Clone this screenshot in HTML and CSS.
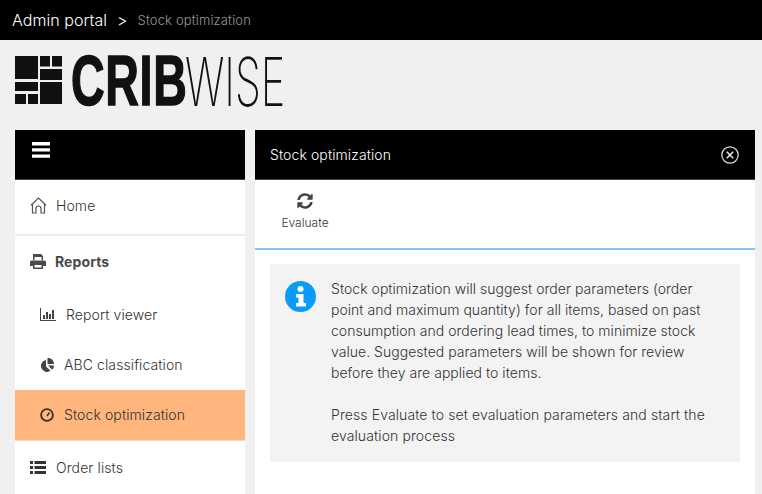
FILE: index.html
```html
<!DOCTYPE html>
<html lang="en">
<head>
    <meta charset="UTF-8">
    <title>Stock optimization</title>
    <link rel="stylesheet" href="styles.css">
</head>
<body>
    <div class="topbar">
        <span class="crumb-main">Admin portal</span>
        <span class="crumb-sep">&gt;</span>
        <span class="crumb-sub">Stock optimization</span>
    </div>
    <div class="logo">
        <svg class="logo-mark" width="48" height="49" viewBox="0 0 48 49">
            <path fill="#111" d="M0 0h23v23H0zM0 26h23v9H0zM0 38h11v10H0zM13 38h10v10H13zM25 0h10v10.500H25zM37 0h10v10.500H37zM25 13h22v11H25zM25 26h22v22H25z"/>
        </svg>
        <span class="logo-crib">CRIB</span>
        <span class="logo-wise">WISE</span>
    </div>
    <div class="main">
        <div class="side">
            <div class="side-head">
                <svg width="18" height="16" viewBox="0 0 18 16"><path fill="#fff" d="M0 0h18v3.400H0zM0 6.200h18v3.400H0zM0 12.400h18v3.400H0z"/></svg>
            </div>
            <ul class="menu">
                <li class="item item-home">
                    <svg class="icon" width="17" height="17" viewBox="0 0 17 17"><path fill="none" stroke="#555" stroke-width="1.200" d="M1 8.200 8.500 1 16 8.200M2.500 7v9H6v-4.500a2.500 2.500 0 0 1 5 0V16h3.500V7"/></svg>
                    Home
                </li>
                <li class="item item-reports">
                    <svg class="icon" width="16" height="15" viewBox="0 0 16 15"><path fill="#4a4a4a" d="M3 0h8l2 2v4h-1.500V3H4.500v3H3zM1.500 6.500h13A1.500 1.500 0 0 1 16 8v4h-3v3H3v-3H0V8a1.500 1.500 0 0 1 1.500-1.500zM4.500 11v2.500h7V11z"/></svg>
                    Reports
                </li>
                <li class="item sub">
                    <svg class="icon" width="16" height="13" viewBox="0 0 16 13"><path fill="#444" d="M0 0h1v12h15v1H0zM3 7h2v4H3zM6 4h2v7H6zM9 6h2v5H9zM12 2h2v9h-2z"/></svg>
                    Report viewer
                </li>
                <li class="item sub">
                    <svg class="icon" width="14" height="14" viewBox="0 0 14 14"><path fill="#444" d="M6 2v6.500l4.500 4.300A6 6 0 1 1 6 2zM7.500 0A6 6 0 0 1 14 6H7.500zM8 7.500h6a6 6 0 0 1-1.800 4.200z"/></svg>
                    ABC classification
                </li>
                <li class="item sub active">
                    <svg class="icon" width="14" height="14" viewBox="0 0 14 14"><circle cx="7" cy="7" r="5.900" fill="none" stroke="#333" stroke-width="1.800"/><path stroke="#333" stroke-width="1.500" d="M7 8 9.500 4.500"/></svg>
                    Stock optimization
                </li>
                <li class="item item-lists">
                    <svg class="icon" width="16" height="13" viewBox="0 0 16 13"><path fill="#333" d="M0 0h3v3H0zM4.500 0H16v3H4.500zM0 5h3v3H0zM4.500 5H16v3H4.500zM0 10h3v3H0zM4.500 10H16v3H4.500z"/></svg>
                    Order lists
                </li>
            </ul>
        </div>
        <div class="panel">
            <div class="panel-head">
                <span>Stock optimization</span>
                <svg width="18" height="18" viewBox="0 0 18 18"><circle cx="9" cy="9" r="8.200" fill="none" stroke="#ddd" stroke-width="1.200"/><path stroke="#eee" stroke-width="1.500" d="M5.800 5.800l6.400 6.400M12.200 5.800l-6.400 6.400"/></svg>
            </div>
            <div class="toolbar">
                <div class="tool">
                    <svg width="16" height="16" viewBox="0 0 512 512"><path fill="#444" d="M370.700 133.300C339.500 104 298.900 88 255.800 88c-77.500.1-144.300 53.200-162.800 126.900-1.300 5.400-6.100 9.200-11.700 9.200H24.100c-7.500 0-13.200-6.800-11.800-14.200C34 94.600 135.500 8 256 8c66.100 0 126.100 26 170.400 68.300L462.100 40.600C477.200 25.500 503 36.200 503 57.600V192c0 13.300-10.700 24-24 24H344.600c-21.400 0-32.100-25.900-17-41zM32 296h134.400c21.400 0 32.100 25.900 17 41l-41.800 41.800c31.300 29.300 71.800 45.300 114.900 45.200 77.400-.1 144.300-53.100 162.800-126.800 1.300-5.400 6.100-9.200 11.700-9.200h57.300c7.500 0 13.200 6.800 11.800 14.200C478 417.400 376.500 504 256 504c-66.100 0-126.100-26-170.400-68.300L49.900 471.400C34.800 486.500 9 475.800 9 454.400V320c0-13.300 10.700-24 24-24z"/></svg>
                    <span>Evaluate</span>
                </div>
            </div>
            <div class="body">
                <div class="notice">
                    <svg class="notice-icon" width="31" height="31" viewBox="0 0 31 31">
                        <circle cx="15.500" cy="15.500" r="15.500" fill="#0a9bfb"/>
                        <circle cx="15.500" cy="8" r="3" fill="#fff"/>
                        <path fill="#fff" d="M11 13h7.500v9H21v3.500H11V22h2.500v-5.500H11z"/>
                    </svg>
                    <div class="notice-text">
                        <p>Stock optimization will suggest order parameters (order point and maximum quantity) for all items, based on past consumption and ordering lead times, to minimize stock value. Suggested parameters will be shown for review before they are applied to items.</p>
                        <p class="notice-press">Press Evaluate to set evaluation parameters and start the evaluation process</p>
                    </div>
                </div>
            </div>
        </div>
    </div>
</body>
</html>
```

FILE: styles.css
```css
*{
    margin:0;
    padding:0;
    box-sizing: border-box;
}
html,body{
    height: 100%;
    overflow: hidden;
}
body{
    background: #f0f0f0;
    font-family: Inter, "Liberation Sans", sans-serif;
    font-size: 14px;
    font-weight: 300;
    color: #333;
}
li{
    list-style: none;
}
.topbar{
    height: 40px;
    background: #000;
    display: flex;
    align-items: center;
    padding-left: 12px;
}
.crumb-main{
    color: #fff;
    font-size: 16px;
    letter-spacing: 0.05px;
}
.crumb-sep{
    color: #fff;
    font-size: 16px;
    margin-left: 10px;
}
.crumb-sub{
    color: #999;
    font-size: 13px;
    margin-left: 10px;
    letter-spacing: 0.15px;
}
.logo{
    height: 90px;
    padding: 16px 0 0 15px;
    display: flex;
    align-items: flex-start;
    overflow: hidden;
}
.logo-mark{
    flex: none;
}
.logo-crib{
    font-family: "Liberation Sans", sans-serif;
    font-weight: bold;
    font-size: 70px;
    line-height: 49px;
    color: #111;
    -webkit-text-stroke: 1.5px #111;
    margin: 1px 0 0 8px;
    width: 114px;
    transform: scaleX(0.665);
    transform-origin: left top;
    letter-spacing: 1px;
}
.logo-wise{
    font-family: Inter, sans-serif;
    font-weight: 200;
    font-size: 67px;
    line-height: 49px;
    color: #111;
    width: 97px;
    margin-top: 1px;
    transform: scaleX(0.62);
    transform-origin: left top;
}
.main{
    display: flex;
    gap: 10px;
    height: 364px;
    padding: 0 7px 0 15px;
}
.side{
    width: 230px;
    flex: none;
    background: #fff;
}
.side-head{
    height: 50px;
    background: #000;
    padding: 12px 0 0 17px;
    border-bottom: 1px solid #444;
}
.item{
    display: flex;
    align-items: center;
    height: 50px;
    font-size: 14px;
    letter-spacing: 0.1px;
    color: #333;
}
.icon{
    flex: none;
}
.item-home{
    height: 56px;
    padding: 0 0 3px 15px;
    gap: 9px;
    border-bottom: 2px solid #eee;
}
.item-reports{
    height: 54px;
    padding: 0 0 4px 15px;
    gap: 9px;
    font-weight: bold;
    color: #4a4a4a;
}
.sub{
    padding: 0 0 1px 25px;
    gap: 10px;
}
.active{
    background: #ffb57c;
}
.item-lists{
    height: 54px;
    padding-left: 15px;
    gap: 10px;
    border-top: 1px solid #ddd;
}
.panel{
    width: 500px;
    flex: none;
    background: #fff;
}
.panel-head{
    height: 50px;
    background: #000;
    color: #fff;
    font-size: 14px;
    letter-spacing: 0.1px;
    display: flex;
    align-items: center;
    justify-content: space-between;
    padding: 0 16px 0 15px;
    border-bottom: 1px solid #444;
}
.toolbar{
    height: 70px;
    border-bottom: 2px solid #7cc8f8;
    padding: 13px 0 0 28px;
}
.tool{
    display: inline-flex;
    flex-direction: column;
    align-items: center;
    gap: 6px;
    width: 44px;
    font-size: 12px;
    color: #333;
}
.body{
    padding: 14px 15px 0;
}
.notice{
    background: #f3f3f3;
    height: 198px;
    padding: 14px 25px 0 15px;
    display: flex;
    gap: 15px;
}
.notice-icon{
    flex: none;
    margin-top: 3px;
}
.notice-text{
    font-size: 14px;
    line-height: 21px;
    letter-spacing: 0.03px;
    color: #333;
}
.notice-text p{
    margin-bottom: 21px;
}
.notice-text .notice-press{
    letter-spacing: 0.1px;
}
```
